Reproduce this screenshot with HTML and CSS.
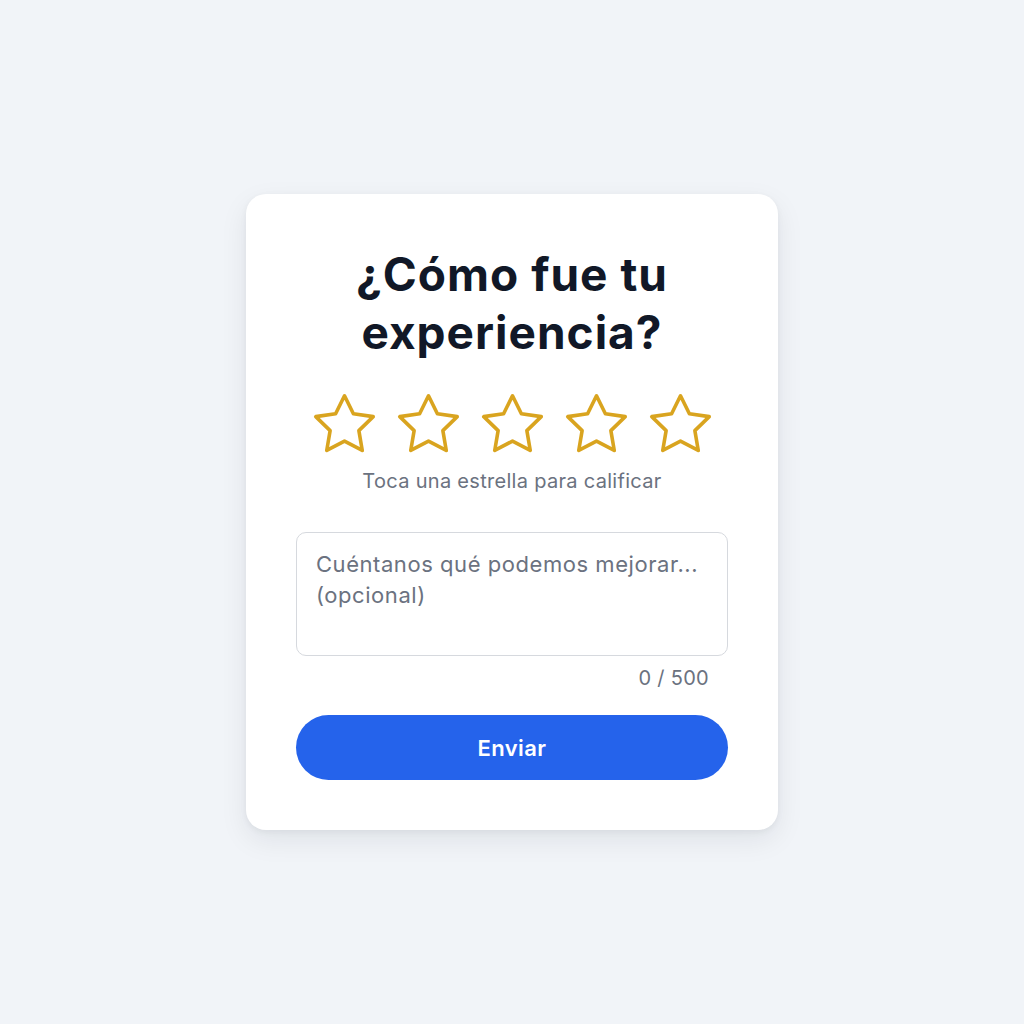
FILE: index.html
```html
<!DOCTYPE html>
<html lang="es">
<head>
<meta charset="utf-8">
<title>Calificación</title>
<link rel="stylesheet" href="styles.css">
</head>
<body>
<main class="card">
  <h1 class="title">¿Cómo fue tu experiencia?</h1>
  <div class="stars">
    <svg class="star" viewBox="0 0 24 24"><polygon points="12 2 15.09 8.26 22 9.27 17 14.14 18.18 21.02 12 17.77 5.82 21.02 7 14.14 2 9.27 8.91 8.26 12 2"/></svg>
    <svg class="star" viewBox="0 0 24 24"><polygon points="12 2 15.09 8.26 22 9.27 17 14.14 18.18 21.02 12 17.77 5.82 21.02 7 14.14 2 9.27 8.91 8.26 12 2"/></svg>
    <svg class="star" viewBox="0 0 24 24"><polygon points="12 2 15.09 8.26 22 9.27 17 14.14 18.18 21.02 12 17.77 5.82 21.02 7 14.14 2 9.27 8.91 8.26 12 2"/></svg>
    <svg class="star" viewBox="0 0 24 24"><polygon points="12 2 15.09 8.26 22 9.27 17 14.14 18.18 21.02 12 17.77 5.82 21.02 7 14.14 2 9.27 8.91 8.26 12 2"/></svg>
    <svg class="star" viewBox="0 0 24 24"><polygon points="12 2 15.09 8.26 22 9.27 17 14.14 18.18 21.02 12 17.77 5.82 21.02 7 14.14 2 9.27 8.91 8.26 12 2"/></svg>
  </div>
  <p class="hint">Toca una estrella para calificar</p>
  <textarea class="comment" placeholder="Cuéntanos qué podemos mejorar... (opcional)"></textarea>
  <div class="counter">0 / 500</div>
  <button class="submit" type="button">Enviar</button>
</main>
</body>
</html>
```
FILE: styles.css
```css
* { box-sizing: border-box; }
html, body { height: 100%; }
body {
  margin: 0;
  background: #f1f4f8;
  font-family: Inter, "Noto Sans", sans-serif;
  display: flex;
  align-items: center;
  justify-content: center;
}
.card {
  width: 532px;
  background: #ffffff;
  border-radius: 20px;
  box-shadow: 0 10px 28px rgba(15, 23, 42, 0.08), 0 2px 6px rgba(15, 23, 42, 0.05);
  padding: 51px 50px 50px;
  display: flex;
  flex-direction: column;
}
.title {
  margin: 0;
  text-align: center;
  font-size: 46px;
  line-height: 58px;
  font-weight: 700;
  color: #111827;
  letter-spacing: 1px;
  padding: 0 40px;
}
.stars {
  display: flex;
  justify-content: center;
  gap: 15px;
  margin-top: 29px;
}
.star {
  width: 69px;
  height: 69px;
  fill: none;
  stroke: #d9a41f;
  stroke-width: 1.25;
  stroke-linejoin: round;
  stroke-linecap: round;
}
.hint {
  margin: 10px 0 0;
  text-align: center;
  font-size: 20px;
  line-height: 24px;
  letter-spacing: 0.3px;
  color: #6b7280;
}
.comment {
  margin-top: 39px;
  width: 100%;
  height: 124px;
  border: 1px solid #d6d9de;
  border-radius: 10px;
  padding: 16px 19px;
  font-family: Inter, "Noto Sans", sans-serif;
  font-size: 22px;
  line-height: 31px;
  letter-spacing: 0.55px;
  color: #111827;
  resize: none;
  outline: none;
}
.comment::placeholder { color: #6b7280; }
.counter {
  margin-top: 10px;
  text-align: right;
  padding-right: 19px;
  font-size: 20px;
  line-height: 24px;
  letter-spacing: 0.3px;
  color: #6b7280;
}
.submit {
  margin-top: 25px;
  height: 65px;
  width: 100%;
  border: none;
  border-radius: 33px;
  background: #2563eb;
  color: #ffffff;
  font-family: Inter, "Noto Sans", sans-serif;
  font-size: 22px;
  font-weight: 600;
  letter-spacing: 0.4px;
}
```
